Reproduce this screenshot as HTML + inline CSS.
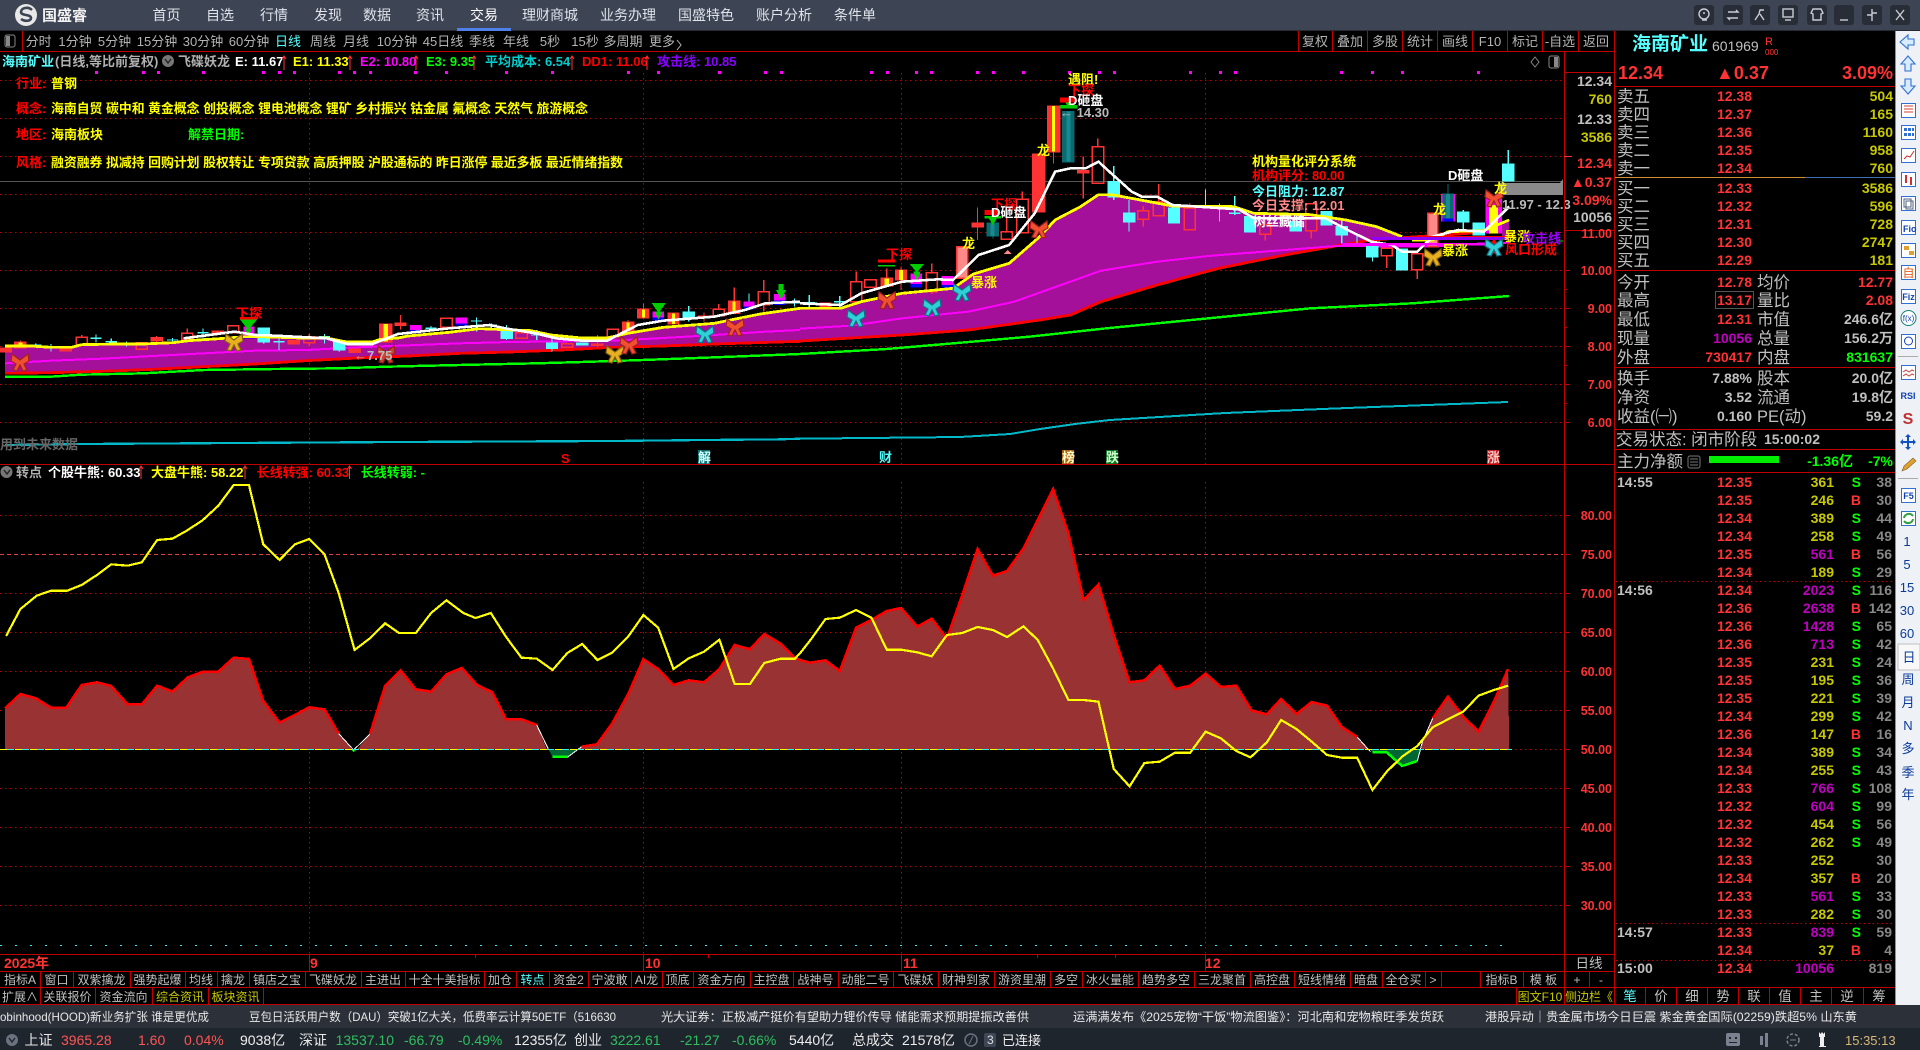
<!DOCTYPE html>
<html lang="zh"><head><meta charset="utf-8"><title>国盛睿</title>
<style>
html,body{margin:0;padding:0;background:#000;overflow:hidden}
svg{display:block;font-family:"Liberation Sans","WenQuanYi Zen Hei","Noto Sans CJK SC",sans-serif}
.cr{shape-rendering:crispEdges}
.l{vector-effect:non-scaling-stroke;fill:none}
.l *,.hr,.c,.w,.gy,.rf,.sa,.te,.rd{vector-effect:non-scaling-stroke}
.hr{fill:none;stroke:#f33;stroke-width:1.5}
.c{fill:#5ff;stroke:#5ff;stroke-width:1.2}
.gy{fill:none;stroke:#bbb;stroke-width:1.2}
.rf{fill:#f33;stroke:#f33;stroke-width:1.2}
.sa{fill:#f88;stroke:#f33;stroke-width:1.5}
.te{fill:#0a6a70;stroke:#0a6a70;stroke-width:1.2}
.g{fill:#c0c0c0}.ye{fill:#c8c800}.re{fill:#f33}.mg{fill:#c000c0}.gr{fill:#0f0}
.b{font-weight:700}
.lb{font-size:16.5px;fill:#c0c0c0}
.tab{font-size:12px;fill:#c0c0c0;text-anchor:middle}
.nav{font-size:14px;fill:#dfe3ea;text-anchor:middle}
.tb{font-size:13px;fill:#b4b4b4;text-anchor:middle}
.ax{font-size:12.5px;font-weight:700;fill:#f33;text-anchor:end}
.n{font-size:14px;font-weight:700;text-anchor:end}
.t{font-size:13px;font-weight:700}
.ne{font-size:12px;fill:#e8e8e8}
.st{font-size:14px}
.sb{font-size:13px;fill:#0a3a9a;text-anchor:middle}
</style></head><body>
<svg width="1920" height="1050" viewBox="0 0 1920 1050" xmlns="http://www.w3.org/2000/svg">
<rect width="1920" height="1050" fill="#000"/>

<!-- top nav -->
<rect width="1920" height="30" fill="#3d4454"/>
<rect y="30" width="1920" height="1" fill="#262a33"/>
<circle cx="26" cy="15" r="11" fill="#e8e8e8"/>
<path d="M32 10c-4-4-11-2-11 2 0 4 10 2 10 6 0 3-6 4-10 1" fill="none" stroke="#3d4454" stroke-width="2.6"/>
<text x="42" y="20.5" font-size="15" font-weight="700" fill="#f2f2f2">国盛睿</text>
<g class="nav">
<text class="nav" x="166.5" y="20">首页</text><text class="nav" x="220" y="20">自选</text><text class="nav" x="274" y="20">行情</text><text class="nav" x="328" y="20">发现</text><text class="nav" x="377" y="20">数据</text><text class="nav" x="430" y="20">资讯</text><text class="nav" x="484" y="20" style="fill:#fff">交易</text><text class="nav" x="550" y="20">理财商城</text><text class="nav" x="628" y="20">业务办理</text><text class="nav" x="706" y="20">国盛特色</text><text class="nav" x="784" y="20">账户分析</text><text class="nav" x="855" y="20">条件单</text>
</g>
<rect x="457" y="28" width="54" height="3" fill="#4f7fe8"/>
<!-- window buttons -->
<g fill="#282d38">
<rect x="1694" y="5" width="20" height="20" rx="3"/><rect x="1723" y="5" width="20" height="20" rx="3"/><rect x="1750" y="5" width="20" height="20" rx="3"/><rect x="1778" y="5" width="20" height="20" rx="3"/><rect x="1807" y="5" width="20" height="20" rx="3"/><rect x="1834" y="5" width="20" height="20" rx="3"/><rect x="1862" y="5" width="20" height="20" rx="3"/><rect x="1890" y="5" width="20" height="20" rx="3"/>
</g>
<g fill="none" stroke="#c8ccd4" stroke-width="1.4">
<circle cx="1704" cy="14" r="5"/><path d="M1702 20h5M1703 13h2"/>
<path d="M1728 12h10l-2-2M1738 18h-10l2 2"/>
<path d="M1755 20l4-6 1-4h4M1760 14l4 6"/>
<rect x="1783" y="9" width="10" height="8"/><path d="M1785 20h6"/>
<path d="M1813 9l-2 4 2 1v6h8v-6l2-1-2-4h-8z"/>
<path d="M1840 20h8"/>
<path d="M1872 9v12M1867 15h5M1872 13h5"/>
<path d="M1896 10l8 10M1904 10l-8 10"/>
</g>

<!-- toolbar row -->
<rect x="5" y="35" width="10" height="12" rx="2" fill="none" stroke="#888"/><rect x="6" y="36" width="4" height="10" fill="#888"/>
<rect x="22" y="31" width="1" height="20" fill="#c00000"/>
<text class="tb" x="38.6" y="46">分时</text><text class="tb" x="75" y="46">1分钟</text><text class="tb" x="114.5" y="46">5分钟</text><text class="tb" x="157" y="46">15分钟</text><text class="tb" x="203" y="46">30分钟</text><text class="tb" x="249" y="46">60分钟</text><text class="tb" x="288" y="46" style="fill:#5ff">日线</text><text class="tb" x="323" y="46">周线</text><text class="tb" x="356" y="46">月线</text><text class="tb" x="397" y="46">10分钟</text><text class="tb" x="443" y="46">45日线</text><text class="tb" x="482" y="46">季线</text><text class="tb" x="516" y="46">年线</text><text class="tb" x="550" y="46">5秒</text><text class="tb" x="585" y="46">15秒</text><text class="tb" x="623" y="46">多周期</text><text class="tb" x="662" y="46">更多</text><path d="M677 40l4 5-4 5" fill="none" stroke="#b4b4b4"/>
<g fill="#c00000"><rect x="1298" y="31" width="1" height="20"/><rect x="1332" y="31" width="1" height="20"/><rect x="1367" y="31" width="1" height="20"/><rect x="1402" y="31" width="1" height="20"/><rect x="1437" y="31" width="1" height="20"/><rect x="1472" y="31" width="1" height="20"/><rect x="1507" y="31" width="1" height="20"/><rect x="1542" y="31" width="1" height="20"/><rect x="1578" y="31" width="1" height="20"/></g>
<text class="tb" x="1315" y="46">复权</text><text class="tb" x="1350" y="46">叠加</text><text class="tb" x="1385" y="46">多股</text><text class="tb" x="1420" y="46">统计</text><text class="tb" x="1455" y="46">画线</text><text class="tb" x="1490" y="46">F10</text><text class="tb" x="1525" y="46">标记</text><text class="tb" x="1560" y="46">-自选</text><text class="tb" x="1596" y="46">返回</text>

<!-- grid -->
<g class="cr" stroke="#c00000" stroke-dasharray="1.5 3.5" fill="none">
<path d="M0 80.5H1563M0 118.5H1563M0 156.5H1563M0 194.5H1563M0 232.5H1563M0 270.5H1563M0 308.5H1563M0 346.5H1563M0 384.5H1563M0 422.5H1563"/>
<path d="M309.5 73V464M643.5 73V464M901.5 73V464M1205.5 73V464"/>
<path d="M0 515.5H1563M0 593.5H1563M0 632.5H1563M0 671.5H1563M0 710.5H1563M0 749.5H1563M0 788.5H1563M0 827.5H1563M0 866.5H1563M0 905.5H1563"/>
<path d="M309.5 482V954M643.5 482V954M901.5 482V954M1205.5 482V954"/>
</g>
<path class="cr" d="M0 554.5H1563" stroke="#e04040" stroke-dasharray="4 3" fill="none"/>
<path class="cr" d="M0 181.5H1563" stroke="#555" fill="none"/>

<!-- magenta dots -->
<path class="cr" fill="#f0f" d="M95 71h3v3h-3zM142 71h3v3h-3zM157 71h3v3h-3zM202 71h3v3h-3zM262 71h3v3h-3zM278 71h3v3h-3zM293 71h3v3h-3zM338 71h3v3h-3zM353 71h3v3h-3zM369 71h3v3h-3zM414 71h3v3h-3zM445 71h3v3h-3zM505 71h3v3h-3zM551 71h3v3h-3zM627 71h3v3h-3zM657 71h3v3h-3zM718 71h3v3h-3zM764 71h3v3h-3zM780 71h3v3h-3zM870 71h3v3h-3zM886 71h3v3h-3zM915 71h3v3h-3zM930 71h3v3h-3zM976 71h3v3h-3zM992 71h3v3h-3zM1022 71h3v3h-3zM1068 71h3v3h-3zM1098 71h3v3h-3zM1113 71h3v3h-3zM1189 71h3v3h-3zM1219 71h3v3h-3zM1234 71h3v3h-3zM1340 71h3v3h-3zM1371 71h3v3h-3zM1401 71h3v3h-3zM1477 71h3v3h-3z"/>

<!-- upper chart left half (coords of zoom 6) -->
<g class="cr" transform="translate(0,270) scale(.5102,.33333)">
<polygon fill="#a5109a" points="10,228 60,228 100,232 140,232 160,224 230,222 280,222 340,218 370,212 430,206 480,200 510,200 590,204 640,204 680,216 730,216 745,208 780,204 800,198 880,187 940,176 1040,182 1080,195 1140,204 1190,204 1230,190 1300,172 1400,160 1490,132 1568,115 1568,214 1400,222 1300,228 1200,232 1100,240 1000,246 900,250 800,258 700,264 600,272 500,282 400,290 300,298 200,304 100,308 10,310"/>
<polyline class="l" stroke="#0f0" stroke-width="2.4" points="10,320 100,320 160,314 280,310 400,300 540,297 660,295 760,290 900,285 1050,280 1140,276 1260,270 1400,262 1568,252"/>
<polyline class="l" stroke="#00b8c8" stroke-width="2.2" points="10,525 160,522 460,519 780,516 1200,513 1380,510 1530,508 1568,506"/>
<polyline class="l" stroke="#f00" stroke-width="2.8" points="10,310 100,308 200,304 300,298 400,290 500,282 600,272 700,264 800,258 900,250 1000,246 1100,240 1200,232 1300,228 1400,222 1568,214"/>
<polyline class="l" stroke="#f0f" stroke-width="2" points="10,280 100,272 200,266 300,258 400,250 500,242 600,240 700,232 800,226 900,220 1000,216 1100,214 1200,212 1300,204 1400,195 1500,185 1568,180"/>
<!-- candles -->
<path class="hr" d="M149 202h22v23h-22zM160 195V202M267 218h22v20h-22zM356 190h22v18h-22zM367 175V190M446 167h22v21h-22zM595 200h22v18h-22zM606 192V200M606 218V228M864 145h22v27h-22zM1011 188h22v17h-22zM1101 222h22v10h-22zM1190 178h22v22h-22zM1398 118h22v20h-22zM1409 102V118M1486 65h22v40h-22zM1497 30V65M1497 105V125"/>
<path class="c" d="M59 225h22M70 220V232M89 230h22M100 222V245M177 205h22M188 193V218M207 215h22M218 205V222M237 222h22M248 215V230M327 210h22M338 204V220M387 188h22M398 175V205M506 175h22v40h-22zM517 215V220M536 215h22M547 200V240M625 200h22M636 192V220M654 215h22v25h-22zM665 240V245M834 175h22M845 168V185M923 153h22M934 143V185M952 165h22M963 160V175M982 180h22v25h-22zM993 165V210M1041 195h22M1052 180V210M1071 220h22v15h-22zM1082 200V245M1130 220h22v4h-22zM1339 126h22v19h-22zM1350 108V155M1468 70V94M1546 98h22M1557 85V110"/>
<path class="rf" d="M0 234h22v11h-22zM29 217h22v16h-22zM40 212V235M118 232h22v10h-22zM296 203h22v10h-22zM307 198V216M416 184h22v8h-22zM565 212h22v10h-22zM576 208V224M684 237h22v10h-22zM744 162h24v53h-24zM774 160h22v6h-22zM785 135V178M1160 222h22v4h-22zM1171 195V232M1220 157h22v26h-22zM1231 150V185M1250 118h22v25h-22zM1261 100V145M1309 130h22v32h-22zM1369 138h22v4h-22zM1380 128V155M1428 94h22v36h-22zM1439 52V130"/>
<path fill="#ff0" d="M752 162h8v53h-8zM36 217h8v16h-8zM1228 157h6v26h-6zM1258 118h6v25h-6zM1317 130h6v32h-6zM1436 94h6v36h-6z"/>
<path fill="#f0f" d="M477 170h22v26h-22zM804 165h22v15h-22zM893 142h22v18h-22zM1279 125h22v18h-22zM1457 94h22v16h-22zM1517 72h22v20h-22z"/>
<path fill="#00f" d="M477 196h22v9h-22zM804 180h22v10h-22zM893 160h22v6h-22zM1279 143h22v9h-22zM1457 110h22v8h-22zM1517 92h22v13h-22z"/>
<path fill="#0c0" d="M470 148h34l-17 32zM480 175h14l-7 25zM1277 99h28l-14 30zM1283 125h16l-8 24zM1521 60h20l-10 28zM1526 42h10v22h-10z"/>
<path fill="#f00" d="M470 141h34v7h-34z"/>
<polyline class="l" stroke="#ff0" stroke-width="2.8" points="10,228 60,228 100,232 140,232 160,224 230,222 280,222 340,218 370,212 430,206 480,200 510,200 590,204 640,204 680,216 730,216 745,208 780,204 800,198 880,187 940,176 1040,182 1080,195 1140,204 1190,204 1230,190 1300,172 1400,160 1490,132 1568,115"/>
<polyline class="l" stroke="#fff" stroke-width="2.6" points="360,205 460,185 500,195 540,197 640,205 680,222 730,222 780,192 880,175 960,165 990,175 1050,190 1090,205 1140,212 1190,212 1250,165 1300,152 1400,140 1460,120 1500,100 1568,95"/>
</g>

<!-- upper chart right half (coords of zoom 7) -->
<g class="cr" transform="translate(800,50) scale(.5102,.33333)">
<polygon fill="#a5109a" points="0,775 80,775 120,755 200,730 300,715 340,672 410,640 470,560 500,510 550,470 585,434 610,434 650,445 730,468 850,470 890,490 1000,494 1070,510 1130,530 1180,560 1050,588 950,615 820,655 700,705 590,755 530,795 470,810 330,840 200,855 0,873"/>
<polygon fill="#a5109a" points="1376,515 1390,510 1390,570 1376,570"/>
<polyline class="l" stroke="#0f0" stroke-width="2.4" points="0,912 170,897 300,880 450,860 600,835 800,805 1000,775 1200,760 1390,738"/>
<polyline class="l" stroke="#f00" stroke-width="2.8" points="0,873 200,855 330,840 470,810 530,795 590,755 700,705 820,655 950,615 1050,588 1120,570 1210,560 1340,547"/>
<polyline class="l" stroke="#f0f" stroke-width="2" points="0,836 100,827 200,805 330,785 420,755 530,695 590,662 700,635 800,618 950,600 1050,588 1240,590 1340,580 1390,578"/>
<!-- candles -->
<path class="hr" d="M99 695h22v60h-22zM110 665V695M110 755V762M127 690h22v22h-22zM247 668h22v57h-22zM258 640V668M258 725V732M394 545h22v23h-22zM405 490V545M425 448h22v100h-22zM436 425V448M573 290h22v110h-22zM584 265V290M662 482h22v26h-22zM673 468V482M673 508V530M692 455h22v42h-22zM703 402V455M753 475h22v65h-22zM764 460V475M901 525h22v28h-22zM912 505V525M912 553V572M991 462h22v81h-22zM1002 543V565M1139 595h22v23h-22zM1150 618V654M1199 612h22v48h-22zM1210 660V687"/>
<path class="c" d="M7 758h22M18 735V775M67 755h22M78 738V775M604 395h22v45h-22zM615 348V395M615 440V450M634 490h22v25h-22zM645 450V545M722 475h22v43h-22zM795 418V470M841 490h22M852 438V495M871 500h22v45h-22zM961 515h22v27h-22zM1021 485h22v40h-22zM1051 530h22v25h-22zM1062 510V585M1092 550V580M1111 590h22v30h-22zM1122 620V635M1169 598h22v62h-22zM1289 487h22v28h-22zM1300 480V545M1319 520h22v35h-22zM1377 342h22v50h-22zM1388 300V342"/>
<path class="gy" d="M811 475h22M822 460V515"/>
<path class="rf" d="M39 760h22v12h-22zM159 685h22v23h-22zM170 655V685M187 660h22v30h-22zM198 650V720M337 520h22v10h-22zM348 472V570M456 312h24v173h-24zM485 168h24v137h-24zM497 305V340M544 362h22v6h-22zM555 320V445"/>
<path class="sa" d="M307 590h22v95h-22zM1230 490h20v100h-20z"/>
<path fill="#ff0" d="M194 660h8v30h-8zM494 168h6v137h-6zM166 685h8v23h-8z"/>
<path class="te" d="M367 520h22v38h-22zM378 500V565M515 185h22v150h-22zM1259 432h22v73h-22zM1270 402V432"/>
<path fill="#178a90" d="M373 520h8v38h-8zM522 185h8v150h-8zM1266 432h8v73h-8z"/>
<path fill="#f0f" d="M217 670h22v32h-22zM277 678h24v27h-24zM1256 432h3v83h-3zM1281 432h3v83h-3z"/>
<path fill="#00f" d="M217 702h22v10h-22zM277 705h24v7h-24zM1259 505h22v10h-22z"/>
<path fill="#0c0" d="M215 642h28l-14 26zM222 665h14l-7 30zM362 498h32v7h-32zM370 505h16l-8 20zM510 165h34v10h-34zM515 145h20l-10 25zM153 645h33v5h-33z"/>
<path fill="#f00" d="M153 628h33v10h-33zM362 480h30v15h-30zM510 142h30v16h-30z"/>
<path fill="#f0f" d="M1344 440h32v110h-32z"/>
<path fill="#ff0" d="M1350 465h18v85h-18z"/>
<path fill="#f88" d="M399 612l8-12 8 12z"/>
<polyline class="l" stroke="#ff0" stroke-width="2.8" points="0,775 80,775 120,755 200,730 300,715 340,672 410,640 470,560 500,510 550,470 585,434 610,434 650,445 730,468 850,470 890,490 1000,494 1070,510 1130,530 1180,560"/>
<polyline class="l" stroke="#ff0" stroke-width="2.8" points="1200,570 1240,570 1270,545 1340,542 1390,510"/>
<polyline class="l" stroke="#fff" stroke-width="2.6" points="0,760 80,765 120,730 200,695 270,688 300,690 350,615 410,585 460,490 500,365 530,355 560,355 585,335 610,370 650,425 670,440 700,440 730,465 780,470 860,478 890,505 1030,505 1080,545 1120,575 1160,585 1180,605 1210,605 1240,560 1290,540 1340,545 1390,470"/>
<rect x="1120" y="561" width="270" height="9" fill="#9000ff"/>
<rect x="1060" y="579" width="310" height="7" fill="#f0f"/>
<rect x="1210" y="558" width="190" height="3" fill="#f00"/>
<path fill="#f00" d="M1345 595l15-28 15 28h-8v15h-14v-15z"/>
<rect x="1486" y="572" width="10" height="3" fill="#0c0"/>
</g>
<!-- long term cyan line, right part -->
<polyline class="cr" fill="none" stroke="#00b8c8" stroke-width="2" points="800,438.700 960,437 1010,434 1040,429 1075,424 1110,420 1225,413 1347,408 1508,402"/>
<!-- gray band -->
<rect x="1499" y="183" width="64" height="12" fill="#8a8a8a"/>
<path d="M1560 183l3-4v4z" fill="#8a8a8a"/>

<!-- butterflies -->
<defs><path id="bf" stroke-width="1.2" d="M0-3L-8-9L-9-2L-4 1L-7 7L-3 8L0 2L3 8L7 7L4 1L9-2L8-9z"/></defs>
<g>
<use href="#bf" x="20" y="363" fill="#f05030" stroke="#a02020"/>
<use href="#bf" x="234" y="343" fill="#e8b020" stroke="#806010"/>
<use href="#bf" x="386" y="355" fill="#d04030" stroke="#902020"/>
<use href="#bf" x="615" y="355" fill="#e8b020" stroke="#806010"/>
<use href="#bf" x="629" y="346" fill="#f05030" stroke="#a02020"/>
<use href="#bf" x="705" y="335" fill="#30d0d8" stroke="#107080"/>
<use href="#bf" x="735" y="328" fill="#f05030" stroke="#a02020"/>
<use href="#bf" x="856" y="319" fill="#30d0d8" stroke="#107080"/>
<use href="#bf" x="887" y="301" fill="#f05030" stroke="#a02020"/>
<use href="#bf" x="932" y="308" fill="#30d0d8" stroke="#107080"/>
<use href="#bf" x="962" y="293" fill="#30d0d8" stroke="#107080"/>
<use href="#bf" x="1039" y="230" fill="#f05030" stroke="#a02020"/>
<use href="#bf" x="1433" y="258" fill="#e8b020" stroke="#806010"/>
<use href="#bf" x="1494" y="199" fill="#f05030" stroke="#a02020"/>
<use href="#bf" x="1494" y="248" fill="#30d0d8" stroke="#107080"/>
</g>

<!-- title row -->
<g class="t">
<text class="t" x="2" y="66" fill="#5ff">海南矿业</text>
<text x="55" y="66" font-size="13" fill="#b0b0b0">(日线,等比前复权)</text>
<circle cx="168" cy="61" r="6" fill="#777"/><path d="M165 59l3 4 3-4" fill="none" stroke="#222" stroke-width="1.4"/>
<text class="t" x="178" y="66" fill="#b0b0b0">飞碟妖龙</text>
<text class="t" x="235" y="66" fill="#fff">E: 11.67</text>
<text class="t" x="293" y="66" fill="#ff0">E1: 11.33</text>
<text class="t" x="360" y="66" fill="#f0f">E2: 10.80</text>
<text class="t" x="426" y="66" fill="#0f0">E3: 9.35</text>
<text class="t" x="485" y="66" fill="#0cc">平均成本: 6.54</text>
<text class="t" x="582" y="66" fill="#f00">DD1: 11.06</text>
<text class="t" x="657" y="66" fill="#80f">攻击线: 10.85</text>
</g>
<path fill="none" stroke="#f33" d="M284 70V56m-2 3l2-3 2 3M350 70V56m-2 3l2-3 2 3M416 70V56m-2 3l2-3 2 3M474 70V56m-2 3l2-3 2 3M572 70V56m-2 3l2-3 2 3M647 70V56m-2 3l2-3 2 3"/>
<g>
<text class="t" x="16" y="88" fill="#f00">行业:</text><text class="t" x="51" y="88" fill="#ff0">普钢</text>
<text class="t" x="16" y="113" fill="#f00">概念:</text><text class="t" x="51" y="113" fill="#ff0" textLength="537" lengthAdjust="spacingAndGlyphs">海南自贸 碳中和 黄金概念 创投概念 锂电池概念 锂矿 乡村振兴 钴金属 氟概念 天然气 旅游概念</text>
<text class="t" x="16" y="139" fill="#f00">地区:</text><text class="t" x="51" y="139" fill="#ff0">海南板块</text><text class="t" x="188" y="139" fill="#0f0">解禁日期:</text>
<text class="t" x="16" y="167" fill="#f00">风格:</text><text class="t" x="51" y="167" fill="#ff0" textLength="572" lengthAdjust="spacingAndGlyphs">融资融券 拟减持 回购计划 股权转让 专项贷款 高质押股 沪股通标的 昨日涨停 最近多板 最近情绪指数</text>
</g>
<g class="t">
<text class="t" x="236" y="318" fill="#f00">下探</text>
<text class="t" x="354" y="360" fill="#bbb">←7.75</text>
<text class="t" x="886" y="259" fill="#f00">下探</text>
<text class="t" x="971" y="287" fill="#ff0">暴涨</text>
<text class="t" x="962" y="248" fill="#ff0">龙</text>
<text class="t" x="1037" y="155" fill="#ff0">龙</text>
<text class="t" x="1433" y="214" fill="#ff0">龙</text>
<text class="t" x="1494" y="193" fill="#ff0">龙</text>
<text class="t" x="991" y="209" fill="#f00">下探</text>
<text class="t" x="991" y="217" fill="#fff">D砸盘</text>
<text class="t" x="1068" y="84" fill="#ff0">遇阻!</text>
<text class="t" x="1068" y="95" fill="#f00">下探</text>
<text class="t" x="1068" y="105" fill="#fff">D砸盘</text>
<text class="t" x="1060" y="117" fill="#bbb">← 14.30</text>
<text class="t" x="1448" y="180" fill="#fff">D砸盘</text>
<text class="t" x="1252" y="166" fill="#ff0">机构量化评分系统</text>
<text class="t" x="1252" y="180" fill="#f00">机构评分:  80.00</text>
<text class="t" x="1252" y="196" fill="#5ff">今日阻力:  12.87</text>
<text class="t" x="1252" y="210" fill="#f88">今日支撑:  12.01</text>
<text class="t" x="1253" y="226" fill="#fff">树丝藏储</text>
<text class="t" x="1502" y="209" fill="#bbb">11.97 - 12.3</text>
<text class="t" x="1442" y="255" fill="#ff0">暴涨</text>
<text class="t" x="1504" y="241" fill="#ff0">暴涨</text>
<text class="t" x="1522" y="243" fill="#90f">攻击线</text>
<text class="t" x="1505" y="254" fill="#f00">风口形成</text>
<text class="t" x="0" y="449" fill="#666">用到未来数据</text>
<text class="t" x="561" y="463" fill="#f00">S</text>
</g>
<rect x="698" y="450" width="12" height="14" fill="#107070"/><text class="t" x="698" y="462" fill="#cff">解</text>
<text class="t" x="879" y="462" fill="#5ff">财</text>
<rect x="1062" y="450" width="12" height="14" fill="#b06010"/><text class="t" x="1062" y="462" fill="#ffc">榜</text>
<rect x="1106" y="450" width="12" height="14" fill="#0a7020"/><text class="t" x="1106" y="462" fill="#cfc">跌</text>
<rect x="1487" y="450" width="12" height="14" fill="#c02020"/><text class="t" x="1487" y="462" fill="#fcc">涨</text>
<path d="M1535 57l4 5-4 5-4-5z" fill="none" stroke="#888"/>
<rect x="1549" y="56" width="10" height="12" rx="2" fill="none" stroke="#888"/><rect x="1554" y="57" width="4" height="10" fill="#888"/>

<!-- lower title -->
<circle cx="6.5" cy="472" r="6" fill="#777"/><path d="M4 470l3 4 3-4" fill="none" stroke="#222" stroke-width="1.4"/>
<text class="t" x="16" y="477" fill="#b0b0b0">转点</text>
<text class="t" x="48" y="477" fill="#fff">个股牛熊: 60.33</text>
<text class="t" x="151" y="477" fill="#ff0">大盘牛熊: 58.22</text>
<text class="t" x="256.6" y="477" fill="#f00">长线转强: 60.33</text>
<text class="t" x="360.7" y="477" fill="#0f0">长线转弱: -</text>
<path fill="none" stroke="#f33" d="M141 479V466m-2 3l2-3 2 3M245 479V466m-2 3l2-3 2 3M349.500 479V466m-2 3l2-3 2 3"/>

<!-- lower chart left -->
<g class="cr" transform="translate(0,465) scale(.5102,.33333)">
<polygon fill="#993333" points="10,853 10,730 40,687 70,700 100,728 130,728 160,660 190,652 218,663 250,718 278,718 308,662 338,680 368,637 398,620 428,620 458,578 488,582 516,708 548,773 578,750 606,727 636,733 664,806 690,853 700,853 725,808 755,662 785,616 815,673 845,680 875,628 905,609 935,660 965,682 992,763 1022,763 1052,780 1072,853 1135,853 1140,845 1170,838 1200,775 1232,685 1261,583 1290,612 1320,660 1350,646 1380,652 1410,612 1440,540 1470,553 1498,507 1530,536 1558,578 1568,585 1568,853"/>
<polygon fill="#006633" points="1075,853 1083,876 1113,876 1135,853"/>
<polygon fill="#0c0" points="687,853 693,862 700,853"/>
<polyline class="l" stroke="#f00" stroke-width="2.5" points="10,730 40,687 70,700 100,728 130,728 160,660 190,652 218,663 250,718 278,718 308,662 338,680 368,637 398,620 428,620 458,578 488,582 516,708 548,773 578,750 606,727 636,733 664,806"/>
<polyline class="l" stroke="#f00" stroke-width="2.5" points="725,808 755,662 785,616 815,673 845,680 875,628 905,609 935,660 965,682 992,763 1022,763 1052,780"/>
<polyline class="l" stroke="#f00" stroke-width="2.5" points="1140,845 1170,838 1200,775 1232,685 1261,583 1290,612 1320,660 1350,646 1380,652 1410,612 1440,540 1470,553 1498,507 1530,536 1558,578 1568,585"/>
<polyline class="l" stroke="#fff" stroke-width="1" points="664,806 693,855 725,808"/>
<polyline class="l" stroke="#fff" stroke-width="1" points="1052,780 1075,853"/>
<polyline class="l" stroke="#fff" stroke-width="1" points="1113,876 1140,845"/>
<polyline class="l" stroke="#0f0" stroke-width="2.5" points="1083,876 1113,876"/>
<polyline class="l" stroke="#ff0" stroke-width="2.2" points="12,513 40,432 72,392 100,377 132,377 160,360 190,330 218,298 250,302 278,292 308,225 338,221 365,198 397,166 428,122 458,60 488,60 516,238 548,285 578,238 606,222 636,268 664,385 695,555 725,520 755,475 782,504 815,504 845,444 875,406 908,444 932,459 962,444 992,516 1022,578 1052,581 1083,615 1112,564 1141,537 1171,585 1200,563 1232,513 1261,450 1290,488 1320,612 1350,580 1380,560 1410,524 1440,657 1470,657 1498,594 1530,581 1558,581 1568,565"/>
</g>
<!-- lower chart right -->
<g class="cr" transform="translate(800,465) scale(.5102,.33333)">
<polygon fill="#993333" points="0,853 0,585 20,593 50,586 78,618 110,488 140,465 170,438 198,429 230,485 258,461 288,520 318,390 348,252 378,332 406,318 438,250 466,165 496,72 526,205 556,405 585,358 615,510 646,652 675,646 705,602 735,672 765,662 795,626 825,666 855,662 885,736 915,748 943,702 973,747 1003,711 1033,722 1062,786 1092,816 1115,853 1218,853 1220,830 1240,760 1270,695 1300,755 1330,800 1360,710 1388,612 1390,853"/>
<polygon fill="#006633" points="1116,853 1122,862 1150,862 1180,903 1210,888 1218,853"/>
<polyline class="l" stroke="#f00" stroke-width="2.5" points="0,585 20,593 50,586 78,618 110,488 140,465 170,438 198,429 230,485 258,461 288,520 318,390 348,252 378,332 406,318 438,250 466,165 496,72 526,205 556,405 585,358 615,510 646,652 675,646 705,602 735,672 765,662 795,626 825,666 855,662 885,736 915,748 943,702 973,747 1003,711 1033,722 1062,786 1092,816"/>
<polyline class="l" stroke="#fff" stroke-width="1" points="1092,816 1118,860"/>
<polyline class="l" stroke="#0f0" stroke-width="2.5" points="1122,862 1150,862 1180,903 1210,888"/>
<polyline class="l" stroke="#fff" stroke-width="1" points="1210,888 1220,830 1240,760"/>
<polyline class="l" stroke="#f00" stroke-width="2.5" points="1240,760 1270,695 1300,755 1330,800 1360,710 1388,612"/>
<polyline class="l" stroke="#ff0" stroke-width="2.2" points="0,565 22,522 50,462 78,458 110,435 140,458 170,554 198,554 230,562 258,574 288,510 318,504 348,486 378,495 406,516 438,484 466,525 496,610 526,705 556,705 585,710 615,912 646,964 675,894 705,890 735,863 765,863 795,800 825,820 855,858 883,877 915,832 943,765 973,792 1003,830 1033,870 1062,878 1092,878 1122,975 1150,920 1180,875 1210,843 1240,787 1270,763 1300,740 1330,692 1360,675 1388,662"/>
</g>
<path class="cr" d="M0 749.500H1512" stroke="#ff0" stroke-dasharray="7 8" fill="none" stroke-width="1.2"/>
<path class="cr" d="M7 749.500H1512" stroke="#3ee" stroke-dasharray="7 8" fill="none" stroke-width="1.2"/>
<path class="cr" d="M0 945.500H1512" stroke="#3ee" stroke-dasharray="2 13" fill="none"/>

<!-- panel lines -->
<g class="cr" fill="#c00000">
<rect y="51" width="1615" height="1"/>
<rect y="464" width="1615" height="1"/>
<rect y="954" width="1615" height="1"/>
<rect y="971" width="1615" height="1"/>
<rect y="987" width="1895" height="1"/>
<rect y="1004" width="1895" height="1"/>
<rect x="1564" y="51" width="1" height="920"/>
<rect x="1614" y="31" width="1" height="974"/>
<rect x="1564" y="72" width="50" height="1"/>
<rect x="1564" y="230" width="50" height="1"/>
<path d="M1564 270h6v1h-6zM1564 308h6v1h-6zM1564 346h6v1h-6zM1564 384h6v1h-6zM1564 422h6v1h-6zM1564 289h3v1h-3zM1564 327h3v1h-3zM1564 365h3v1h-3zM1564 403h3v1h-3zM1564 515h6v1h-6zM1564 554h6v1h-6zM1564 593h6v1h-6zM1564 632h6v1h-6zM1564 671h6v1h-6zM1564 710h6v1h-6zM1564 749h6v1h-6zM1564 788h6v1h-6zM1564 827h6v1h-6zM1564 866h6v1h-6zM1564 905h6v1h-6z"/>
</g>
<path fill="#f33" d="M1564 156h8v1h-8z"/>
<!-- axis labels -->
<text class="n" x="1612" y="86" fill="#c0c0c0">12.34</text>
<text class="n" x="1612" y="104" fill="#c8c800">760</text>
<text class="n" x="1612" y="124" fill="#c0c0c0">12.33</text>
<text class="n" x="1612" y="142" fill="#c8c800">3586</text>
<text class="n" x="1612" y="168" fill="#f33">12.34</text>
<text class="n" x="1612" y="187" fill="#f33">▲0.37</text>
<text class="n" x="1612" y="205" fill="#f33">3.09%</text>
<text class="n" x="1612" y="222" fill="#c0c0c0">10056</text>
<text class="ax" x="1612" y="238">11.00</text><text class="ax" x="1612" y="275">10.00</text><text class="ax" x="1612" y="313">9.00</text><text class="ax" x="1612" y="351">8.00</text><text class="ax" x="1612" y="389">7.00</text><text class="ax" x="1612" y="427">6.00</text>
<text class="ax" x="1612" y="520">80.00</text><text class="ax" x="1612" y="559">75.00</text><text class="ax" x="1612" y="598">70.00</text><text class="ax" x="1612" y="637">65.00</text><text class="ax" x="1612" y="676">60.00</text><text class="ax" x="1612" y="715">55.00</text><text class="ax" x="1612" y="754">50.00</text><text class="ax" x="1612" y="793">45.00</text><text class="ax" x="1612" y="832">40.00</text><text class="ax" x="1612" y="871">35.00</text><text class="ax" x="1612" y="910">30.00</text>

<!-- date row -->
<text x="4" y="968" font-size="14" font-weight="700" fill="#f33">2025年</text>
<text x="310" y="968" font-size="14" font-weight="700" fill="#f33">9</text>
<text x="645" y="968" font-size="14" font-weight="700" fill="#f33">10</text>
<text x="903" y="968" font-size="14" font-weight="700" fill="#f33">11</text>
<text x="1205" y="968" font-size="14" font-weight="700" fill="#f33">12</text>
<path class="cr" fill="#c00000" d="M309 955h1v16h-1zM643 955h1v16h-1zM901 955h1v16h-1zM1205 955h1v16h-1zM475 955h1v3h-1zM708 955h1v3h-1zM1037 955h1v3h-1zM1115 955h1v3h-1z"/>
<text class="tab" x="1589" y="968" style="font-size:13.5px">日线</text>

<!-- tabs row 1 -->
<g class="cr" fill="#c00000"><path d="M40 971h1v17h-1zM73 971h1v17h-1zM130 971h1v17h-1zM185 971h1v17h-1zM217 971h1v17h-1zM249 971h1v17h-1zM305 971h1v17h-1zM361 971h1v17h-1zM405 971h1v17h-1zM484 971h1v17h-1zM516 971h1v17h-1zM549 971h1v17h-1zM588 971h1v17h-1zM631 971h1v17h-1zM662 971h1v17h-1zM693 971h1v17h-1zM750 971h1v17h-1zM793 971h1v17h-1zM838 971h1v17h-1zM893 971h1v17h-1zM938 971h1v17h-1zM994 971h1v17h-1zM1050 971h1v17h-1zM1082 971h1v17h-1zM1138 971h1v17h-1zM1194 971h1v17h-1zM1250 971h1v17h-1zM1294 971h1v17h-1zM1350 971h1v17h-1zM1382 971h1v17h-1zM1425 971h1v17h-1zM1441 971h1v17h-1zM1480 971h1v17h-1zM1523 971h1v17h-1zM1564 971h1v17h-1zM1589 971h1v17h-1z"/>
<path d="M40 988h1v16h-1zM95 988h1v16h-1zM152 988h1v16h-1zM208 988h1v16h-1zM263 988h1v16h-1zM1516 988h1v16h-1zM1564 988h1v16h-1zM1645 988h1v16h-1zM1676 988h1v16h-1zM1707 988h1v16h-1zM1738 988h1v16h-1zM1769 988h1v16h-1zM1800 988h1v16h-1zM1831 988h1v16h-1zM1863 988h1v16h-1zM1895 971h1v34h-1z"/></g>
<g>
<text class="tab" x="20" y="984">指标A</text><text class="tab" x="56.500" y="984">窗口</text><text class="tab" x="101.500" y="984">双紫擒龙</text><text class="tab" x="157.500" y="984">强势起爆</text><text class="tab" x="201" y="984">均线</text><text class="tab" x="233" y="984">擒龙</text><text class="tab" x="277" y="984">镇店之宝</text><text class="tab" x="333" y="984">飞碟妖龙</text><text class="tab" x="383" y="984">主进出</text><text class="tab" x="444.500" y="984">十全十美指标</text><text class="tab" x="500" y="984">加仓</text><text class="tab" x="532.500" y="984" style="fill:#5ff">转点</text><text class="tab" x="568.500" y="984">资金2</text><text class="tab" x="609.500" y="984">宁波敢</text><text class="tab" x="646.500" y="984">AI龙</text><text class="tab" x="677.500" y="984">顶底</text><text class="tab" x="721.500" y="984">资金方向</text><text class="tab" x="771.500" y="984">主控盘</text><text class="tab" x="815.500" y="984">战神号</text><text class="tab" x="865.500" y="984">动能二号</text><text class="tab" x="915.500" y="984">飞碟妖</text><text class="tab" x="966" y="984">财神到家</text><text class="tab" x="1022" y="984">游资里潮</text><text class="tab" x="1066" y="984">多空</text><text class="tab" x="1110" y="984">冰火量能</text><text class="tab" x="1166" y="984">趋势多空</text><text class="tab" x="1222" y="984">三龙聚首</text><text class="tab" x="1272" y="984">高控盘</text><text class="tab" x="1322" y="984">短线情绪</text><text class="tab" x="1366" y="984">暗盘</text><text class="tab" x="1403.500" y="984">全仓买</text><text class="tab" x="1433" y="984">&gt;</text><text class="tab" x="1501.500" y="984">指标B</text><text class="tab" x="1543.500" y="984">模 板</text><text class="tab" x="1577" y="984">+</text><text class="tab" x="1601" y="984">-</text>
<text class="tab" x="20" y="1001">扩展∧</text><text class="tab" x="67.500" y="1001">关联报价</text><text class="tab" x="123.500" y="1001">资金流向</text><text class="tab" x="180" y="1001" style="fill:#c8c800">综合资讯</text><text class="tab" x="235.500" y="1001" style="fill:#c8c800">板块资讯</text>
<text class="tab" x="1540" y="1001" style="fill:#c8c800">图文F10</text><text class="tab" x="1589" y="1001" style="fill:#c8c800">侧边栏《</text>
<text class="tab" x="1630" y="1001" style="fill:#5ff;font-size:13.5px">笔</text><text class="tab" x="1661" y="1001" style="font-size:13.5px">价</text><text class="tab" x="1692" y="1001" style="font-size:13.5px">细</text><text class="tab" x="1723" y="1001" style="font-size:13.5px">势</text><text class="tab" x="1754" y="1001" style="font-size:13.5px">联</text><text class="tab" x="1785" y="1001" style="font-size:13.5px">值</text><text class="tab" x="1816" y="1001" style="font-size:13.5px">主</text><text class="tab" x="1847" y="1001" style="font-size:13.5px">逆</text><text class="tab" x="1879" y="1001" style="font-size:13.5px">筹</text>
</g>

<!-- news -->
<rect y="1005" width="1920" height="23" fill="#2b3039"/>
<text class="ne" x="0" y="1021" textLength="209" lengthAdjust="spacingAndGlyphs">obinhood(HOOD)新业务扩张 谁是更优成</text>
<text class="ne" x="249" y="1021" textLength="367" lengthAdjust="spacingAndGlyphs">豆包日活跃用户数（DAU）突破1亿大关，低费率云计算50ETF（516630</text>
<text class="ne" x="661" y="1021" textLength="368" lengthAdjust="spacingAndGlyphs">光大证券：正极减产挺价有望助力锂价传导 储能需求预期提振改善供</text>
<text class="ne" x="1073" y="1021" textLength="371" lengthAdjust="spacingAndGlyphs">运满满发布《2025宠物“干饭”物流图鉴》：河北南和宠物粮旺季发货跃</text>
<text class="ne" x="1485" y="1021" textLength="372" lengthAdjust="spacingAndGlyphs">港股异动｜贵金属市场今日巨震 紫金黄金国际(02259)跌超5% 山东黄</text>

<!-- status -->
<rect y="1028" width="1920" height="22" fill="#1f252d"/>
<circle cx="12" cy="1040" r="6" fill="#6a7280"/><path d="M9 1038l3 4 3-4" fill="none" stroke="#1f252d" stroke-width="1.4"/>
<g class="st">
<text class="st" x="24.500" y="1045" fill="#e8e8e8">上证</text>
<text class="st" x="61" y="1045" fill="#f55">3965.28</text>
<text class="st" x="138" y="1045" fill="#f55">1.60</text>
<text class="st" x="184" y="1045" fill="#f55">0.04%</text>
<text class="st" x="240" y="1045" fill="#eee">9038亿</text>
<text class="st" x="299" y="1045" fill="#e8e8e8">深证</text>
<text class="st" x="335.600" y="1045" fill="#2fbf5f">13537.10</text>
<text class="st" x="404" y="1045" fill="#2fbf5f">-66.79</text>
<text class="st" x="458" y="1045" fill="#2fbf5f">-0.49%</text>
<text class="st" x="514" y="1045" fill="#eee">12355亿</text>
<text class="st" x="574" y="1045" fill="#e8e8e8">创业</text>
<text class="st" x="610" y="1045" fill="#2fbf5f">3222.61</text>
<text class="st" x="680" y="1045" fill="#2fbf5f">-21.27</text>
<text class="st" x="732" y="1045" fill="#2fbf5f">-0.66%</text>
<text class="st" x="789" y="1045" fill="#eee">5440亿</text>
<text class="st" x="852" y="1045" fill="#e8e8e8">总成交</text>
<text class="st" x="902" y="1045" fill="#eee">21578亿</text>
</g>
<circle cx="971" cy="1040" r="6" fill="none" stroke="#6a7280" stroke-width="1.5"/><path d="M969 1044l4-8" stroke="#6a7280" fill="none"/>
<rect x="984" y="1033" width="12" height="14" rx="2" fill="#3f4757"/><text x="987" y="1044" font-size="12" fill="#ddd">3</text>
<text x="1002" y="1045" font-size="13" fill="#eee">已连接</text>
<rect x="1726" y="1033" width="14" height="13" rx="2" fill="#7a8290"/><path d="M1729 1037h2v2h-2zM1735 1037h2v2h-2zM1729 1042h8v1h-8z" fill="#1f252d"/>
<path d="M1760 1036h3v9h-3zM1765 1033h3v14h-3z" fill="#7a8290"/>
<circle cx="1793" cy="1040" r="6" fill="none" stroke="#7a8290" stroke-dasharray="3 2" stroke-width="1.5"/><path d="M1790 1040h6" stroke="#7a8290"/>
<path d="M1819 1032l1.500 2 1.500-2 1.500 2 1.500-2v5h-1v9h2v1h-7v-1h1v-9h-1z" fill="#f0f0f0"/>
<text x="1845" y="1045" font-size="13" fill="#d8b878">15:35:13</text>

<!-- right panel -->
<text x="1632" y="50" font-size="19" font-weight="700" fill="#5ff">海南矿业</text>
<text x="1712" y="51" font-size="14" fill="#c0c0c0">601969</text>
<text x="1765" y="45" font-size="11" fill="#f33">R</text>
<text x="1765" y="55" font-size="8" fill="#f33">000</text>
<text x="1618" y="79" font-size="18" font-weight="700" fill="#f33">12.34</text>
<text x="1716" y="79" font-size="18" font-weight="700" fill="#f33">▲0.37</text>
<text x="1893" y="79" font-size="18" font-weight="700" fill="#f33" text-anchor="end">3.09%</text>
<g class="cr" fill="#c00000">
<rect x="1615" y="86" width="280" height="1"/><rect x="1615" y="270" width="280" height="1"/><rect x="1615" y="367" width="280" height="1"/><rect x="1615" y="429" width="280" height="1"/><rect x="1615" y="449" width="280" height="1"/><rect x="1615" y="472" width="280" height="1"/>
</g>
<rect class="cr" x="1615" y="177" width="190" height="1" fill="#d09030"/><rect class="cr" x="1805" y="177" width="90" height="1" fill="#4070b0"/>

<g>
<text class="lb" x="1617" y="102">卖五</text><text class="lb" x="1617" y="120">卖四</text><text class="lb" x="1617" y="138">卖三</text><text class="lb" x="1617" y="156">卖二</text><text class="lb" x="1617" y="174">卖一</text>
<text class="lb" x="1617" y="194">买一</text><text class="lb" x="1617" y="212">买二</text><text class="lb" x="1617" y="230">买三</text><text class="lb" x="1617" y="248">买四</text><text class="lb" x="1617" y="266">买五</text>
</g>
<g class="re n">
<text class="n re" x="1752" y="101">12.38</text><text class="n re" x="1752" y="119">12.37</text><text class="n re" x="1752" y="137">12.36</text><text class="n re" x="1752" y="155">12.35</text><text class="n re" x="1752" y="173">12.34</text>
<text class="n re" x="1752" y="193">12.33</text><text class="n re" x="1752" y="211">12.32</text><text class="n re" x="1752" y="229">12.31</text><text class="n re" x="1752" y="247">12.30</text><text class="n re" x="1752" y="265">12.29</text>
</g>
<g>
<text class="n ye" x="1893" y="101">504</text><text class="n ye" x="1893" y="119">165</text><text class="n ye" x="1893" y="137">1160</text><text class="n ye" x="1893" y="155">958</text><text class="n ye" x="1893" y="173">760</text>
<text class="n ye" x="1893" y="193">3586</text><text class="n ye" x="1893" y="211">596</text><text class="n ye" x="1893" y="229">728</text><text class="n ye" x="1893" y="247">2747</text><text class="n ye" x="1893" y="265">181</text>
</g>
<text class="lb" x="1617" y="288">今开</text><text class="n re" x="1752" y="287">12.78</text><text class="lb" x="1757" y="288">均价</text><text class="n re" x="1893" y="287">12.77</text>
<rect x="1715.500" y="291.500" width="38" height="17" fill="none" stroke="#555"/>
<text class="lb" x="1617" y="306">最高</text><text class="n re" x="1752" y="305">13.17</text><text class="lb" x="1757" y="306">量比</text><text class="n re" x="1893" y="305">2.08</text>
<text class="lb" x="1617" y="325">最低</text><text class="n re" x="1752" y="324">12.31</text><text class="lb" x="1757" y="325">市值</text><text class="n g" x="1893" y="324">246.6亿</text>
<text class="lb" x="1617" y="344">现量</text><text class="n mg" x="1752" y="343">10056</text><text class="lb" x="1757" y="344">总量</text><text class="n g" x="1893" y="343">156.2万</text>
<text class="lb" x="1617" y="363">外盘</text><text class="n re" x="1752" y="362">730417</text><text class="lb" x="1757" y="363">内盘</text><text class="n gr" x="1893" y="362">831637</text>
<text class="lb" x="1617" y="384">换手</text><text class="n g" x="1752" y="383">7.88%</text><text class="lb" x="1757" y="384">股本</text><text class="n g" x="1893" y="383">20.0亿</text>
<text class="lb" x="1617" y="403">净资</text><text class="n g" x="1752" y="402">3.52</text><text class="lb" x="1757" y="403">流通</text><text class="n g" x="1893" y="402">19.8亿</text>
<text class="lb" x="1617" y="422">收益(㈠)</text><text class="n g" x="1752" y="421">0.160</text><text class="lb" x="1757" y="422">PE(动)</text><text class="n g" x="1893" y="421">59.2</text>
<text class="lb" x="1616" y="445">交易状态: 闭市阶段</text><text class="n g" x="1820" y="444">15:00:02</text>
<text class="lb" x="1617" y="467">主力净额</text>
<rect x="1688" y="456" width="12" height="12" rx="2" fill="none" stroke="#777"/><path d="M1690 459h8M1690 462h8M1690 465h8" stroke="#777"/>
<rect x="1709" y="456" width="70" height="7" fill="#0e0"/>
<text class="n gr" x="1853" y="466">-1.36亿</text><text class="n gr" x="1893" y="466">-7%</text>

<!-- ticks -->
<path class="cr" d="M1616 581.500H1895M1616 923.500H1895M1616 960.500H1895" stroke="#c00000" stroke-dasharray="1.500 3" fill="none"/>
<text class="n g" style="text-anchor:start" x="1617" y="487">14:55</text><text class="n g" style="text-anchor:start" x="1617" y="595">14:56</text><text class="n g" style="text-anchor:start" x="1617" y="937">14:57</text><text class="n g" style="text-anchor:start" x="1617" y="973">15:00</text>
<g>
<text class="n re" x="1752" y="487">12.35</text><text class="n ye" x="1834" y="487">361</text><text class="n gr" x="1861" y="487">S</text><text class="n" fill="#888" x="1892" y="487">38</text>
<text class="n re" x="1752" y="505">12.35</text><text class="n ye" x="1834" y="505">246</text><text class="n re" x="1861" y="505">B</text><text class="n" fill="#888" x="1892" y="505">30</text>
<text class="n re" x="1752" y="523">12.34</text><text class="n ye" x="1834" y="523">389</text><text class="n gr" x="1861" y="523">S</text><text class="n" fill="#888" x="1892" y="523">44</text>
<text class="n re" x="1752" y="541">12.34</text><text class="n ye" x="1834" y="541">258</text><text class="n gr" x="1861" y="541">S</text><text class="n" fill="#888" x="1892" y="541">49</text>
<text class="n re" x="1752" y="559">12.35</text><text class="n mg" x="1834" y="559">561</text><text class="n re" x="1861" y="559">B</text><text class="n" fill="#888" x="1892" y="559">56</text>
<text class="n re" x="1752" y="577">12.34</text><text class="n ye" x="1834" y="577">189</text><text class="n gr" x="1861" y="577">S</text><text class="n" fill="#888" x="1892" y="577">29</text>
<text class="n re" x="1752" y="595">12.34</text><text class="n mg" x="1834" y="595">2023</text><text class="n gr" x="1861" y="595">S</text><text class="n" fill="#888" x="1892" y="595">116</text>
<text class="n re" x="1752" y="613">12.36</text><text class="n mg" x="1834" y="613">2638</text><text class="n re" x="1861" y="613">B</text><text class="n" fill="#888" x="1892" y="613">142</text>
<text class="n re" x="1752" y="631">12.36</text><text class="n mg" x="1834" y="631">1428</text><text class="n gr" x="1861" y="631">S</text><text class="n" fill="#888" x="1892" y="631">65</text>
<text class="n re" x="1752" y="649">12.36</text><text class="n mg" x="1834" y="649">713</text><text class="n gr" x="1861" y="649">S</text><text class="n" fill="#888" x="1892" y="649">42</text>
<text class="n re" x="1752" y="667">12.35</text><text class="n ye" x="1834" y="667">231</text><text class="n gr" x="1861" y="667">S</text><text class="n" fill="#888" x="1892" y="667">24</text>
<text class="n re" x="1752" y="685">12.35</text><text class="n ye" x="1834" y="685">195</text><text class="n gr" x="1861" y="685">S</text><text class="n" fill="#888" x="1892" y="685">36</text>
<text class="n re" x="1752" y="703">12.35</text><text class="n ye" x="1834" y="703">221</text><text class="n gr" x="1861" y="703">S</text><text class="n" fill="#888" x="1892" y="703">39</text>
<text class="n re" x="1752" y="721">12.34</text><text class="n ye" x="1834" y="721">299</text><text class="n gr" x="1861" y="721">S</text><text class="n" fill="#888" x="1892" y="721">42</text>
<text class="n re" x="1752" y="739">12.36</text><text class="n ye" x="1834" y="739">147</text><text class="n re" x="1861" y="739">B</text><text class="n" fill="#888" x="1892" y="739">16</text>
<text class="n re" x="1752" y="757">12.34</text><text class="n ye" x="1834" y="757">389</text><text class="n gr" x="1861" y="757">S</text><text class="n" fill="#888" x="1892" y="757">34</text>
<text class="n re" x="1752" y="775">12.34</text><text class="n ye" x="1834" y="775">255</text><text class="n gr" x="1861" y="775">S</text><text class="n" fill="#888" x="1892" y="775">43</text>
<text class="n re" x="1752" y="793">12.33</text><text class="n mg" x="1834" y="793">766</text><text class="n gr" x="1861" y="793">S</text><text class="n" fill="#888" x="1892" y="793">108</text>
<text class="n re" x="1752" y="811">12.32</text><text class="n mg" x="1834" y="811">604</text><text class="n gr" x="1861" y="811">S</text><text class="n" fill="#888" x="1892" y="811">99</text>
<text class="n re" x="1752" y="829">12.32</text><text class="n ye" x="1834" y="829">454</text><text class="n gr" x="1861" y="829">S</text><text class="n" fill="#888" x="1892" y="829">56</text>
<text class="n re" x="1752" y="847">12.32</text><text class="n ye" x="1834" y="847">262</text><text class="n gr" x="1861" y="847">S</text><text class="n" fill="#888" x="1892" y="847">49</text>
<text class="n re" x="1752" y="865">12.33</text><text class="n ye" x="1834" y="865">252</text><text class="n" fill="#888" x="1892" y="865">30</text>
<text class="n re" x="1752" y="883">12.34</text><text class="n ye" x="1834" y="883">357</text><text class="n re" x="1861" y="883">B</text><text class="n" fill="#888" x="1892" y="883">20</text>
<text class="n re" x="1752" y="901">12.33</text><text class="n mg" x="1834" y="901">561</text><text class="n gr" x="1861" y="901">S</text><text class="n" fill="#888" x="1892" y="901">33</text>
<text class="n re" x="1752" y="919">12.33</text><text class="n ye" x="1834" y="919">282</text><text class="n gr" x="1861" y="919">S</text><text class="n" fill="#888" x="1892" y="919">30</text>
<text class="n re" x="1752" y="937">12.33</text><text class="n mg" x="1834" y="937">839</text><text class="n gr" x="1861" y="937">S</text><text class="n" fill="#888" x="1892" y="937">59</text>
<text class="n re" x="1752" y="955">12.34</text><text class="n ye" x="1834" y="955">37</text><text class="n re" x="1861" y="955">B</text><text class="n" fill="#888" x="1892" y="955">4</text>
<text class="n re" x="1752" y="973">12.34</text><text class="n mg" x="1834" y="973">10056</text><text class="n" fill="#888" x="1892" y="973">819</text>
</g>

<!-- sidebar -->
<rect x="1896" y="31" width="24" height="974" fill="#eef1f6"/>
<rect x="1895" y="31" width="1" height="974" fill="#909090"/>
<g fill="#d8ecff" stroke="#3070d0" stroke-width="1.1">
<path d="M1900 42l8-7v4h6v6h-6v4z"/>
<path d="M1908 56l7 8h-4v7h-6v-7h-4z"/>
<path d="M1905 79h6v7h4l-7 8-7-8h4z"/>
</g>
<g fill="#fff" stroke="#3070d0">
<rect x="1901.500" y="103.500" width="14" height="14"/><rect x="1901.500" y="125.500" width="14" height="14"/><rect x="1901.500" y="148.500" width="14" height="14"/><rect x="1901.500" y="172.500" width="14" height="14"/><rect x="1901.500" y="196.500" width="14" height="14"/><rect x="1901.500" y="220.500" width="14" height="14"/><rect x="1901.500" y="243.500" width="14" height="14"/><rect x="1901.500" y="265.500" width="14" height="14"/><rect x="1901.500" y="289.500" width="14" height="14"/><rect x="1901.500" y="334.500" width="14" height="14"/><rect x="1901.500" y="365.500" width="14" height="14"/><rect x="1901.500" y="488.500" width="14" height="14"/><rect x="1901.500" y="511.500" width="14" height="14"/>
</g>
<path d="M1904 106h9M1904 109h9M1904 112h9" stroke="#d04030"/>
<path d="M1904 128h3v3h-3zM1908 128h3v3h-3zM1912 128h2v3h-2zM1904 133h3v3h-3zM1908 133h3v3h-3zM1912 133h2v3h-2z" fill="#3070d0"/>
<path d="M1904 159l3-3 3 1 4-6" fill="none" stroke="#d03030"/>
<path d="M1906 175v8M1911 177v8" stroke="#d03030" stroke-width="2"/>
<path d="M1904 199h7v8h-7zM1906 201h7v8h-7z" fill="none" stroke="#506080"/>
<text x="1903" y="232" font-size="9" fill="#1040b0" font-weight="700">Fio</text>
<path d="M1904 246h5v4h-5zM1909 251h5v4h-5z" fill="#e0a030"/>
<text x="1908.500" y="277" font-size="12" fill="#e06020" text-anchor="middle">自</text>
<text x="1908.500" y="300" font-size="9" fill="#1040b0" text-anchor="middle" font-weight="700">Fiz</text>
<circle cx="1908.500" cy="318" r="7.500" fill="#fff" stroke="#108070"/><text x="1908.500" y="321" font-size="8" fill="#1040b0" text-anchor="middle">f(x)</text>
<circle cx="1908.500" cy="341" r="4" fill="none" stroke="#1040b0"/>
<rect x="1898" y="356" width="20" height="1" fill="#aaa"/>
<path d="M1903 372l3-2 3 2 3-2 2 1M1903 376l3-2 3 2 3-2 2 1" fill="none" stroke="#d04040"/>
<text x="1908" y="399" font-size="9" font-weight="700" fill="#1040b0" text-anchor="middle">RSI</text>
<text x="1908" y="424" font-size="16" font-weight="700" fill="#c03030" text-anchor="middle">S</text>
<path d="M1908 434l3 3h-2v4h4v-2l3 3-3 3v-2h-4v4h2l-3 3-3-3h2v-4h-4v2l-3-3 3-3v2h4v-4h-2z" fill="#1050c0"/>
<path d="M1902 471l2-5 9-8 3 3-9 8z" fill="#e0a030" stroke="#806020" stroke-width=".6"/>
<rect x="1898" y="478" width="20" height="1" fill="#aaa"/>
<text x="1908.500" y="499" font-size="9" font-weight="700" fill="#1040b0" text-anchor="middle">F5</text>
<path d="M1904 518a5 5 0 0 1 9-2M1913 519a5 5 0 0 1-9 2" fill="none" stroke="#30a040" stroke-width="2"/>
<text class="sb" x="1907" y="546">1</text><text class="sb" x="1907" y="569">5</text><text class="sb" x="1907" y="592">15</text><text class="sb" x="1907" y="615">30</text><text class="sb" x="1907" y="638">60</text>
<rect x="1898" y="644" width="22" height="26" fill="#f8f8f8" stroke="#c0c0c0"/>
<text class="sb" x="1909" y="662" font-size="14">日</text><text class="sb" x="1908" y="684">周</text><text class="sb" x="1908" y="707">月</text><text class="sb" x="1908" y="730">N</text><text class="sb" x="1908" y="753">多</text><text class="sb" x="1908" y="777">季</text><text class="sb" x="1908" y="799">年</text>
</svg>
</body></html>
